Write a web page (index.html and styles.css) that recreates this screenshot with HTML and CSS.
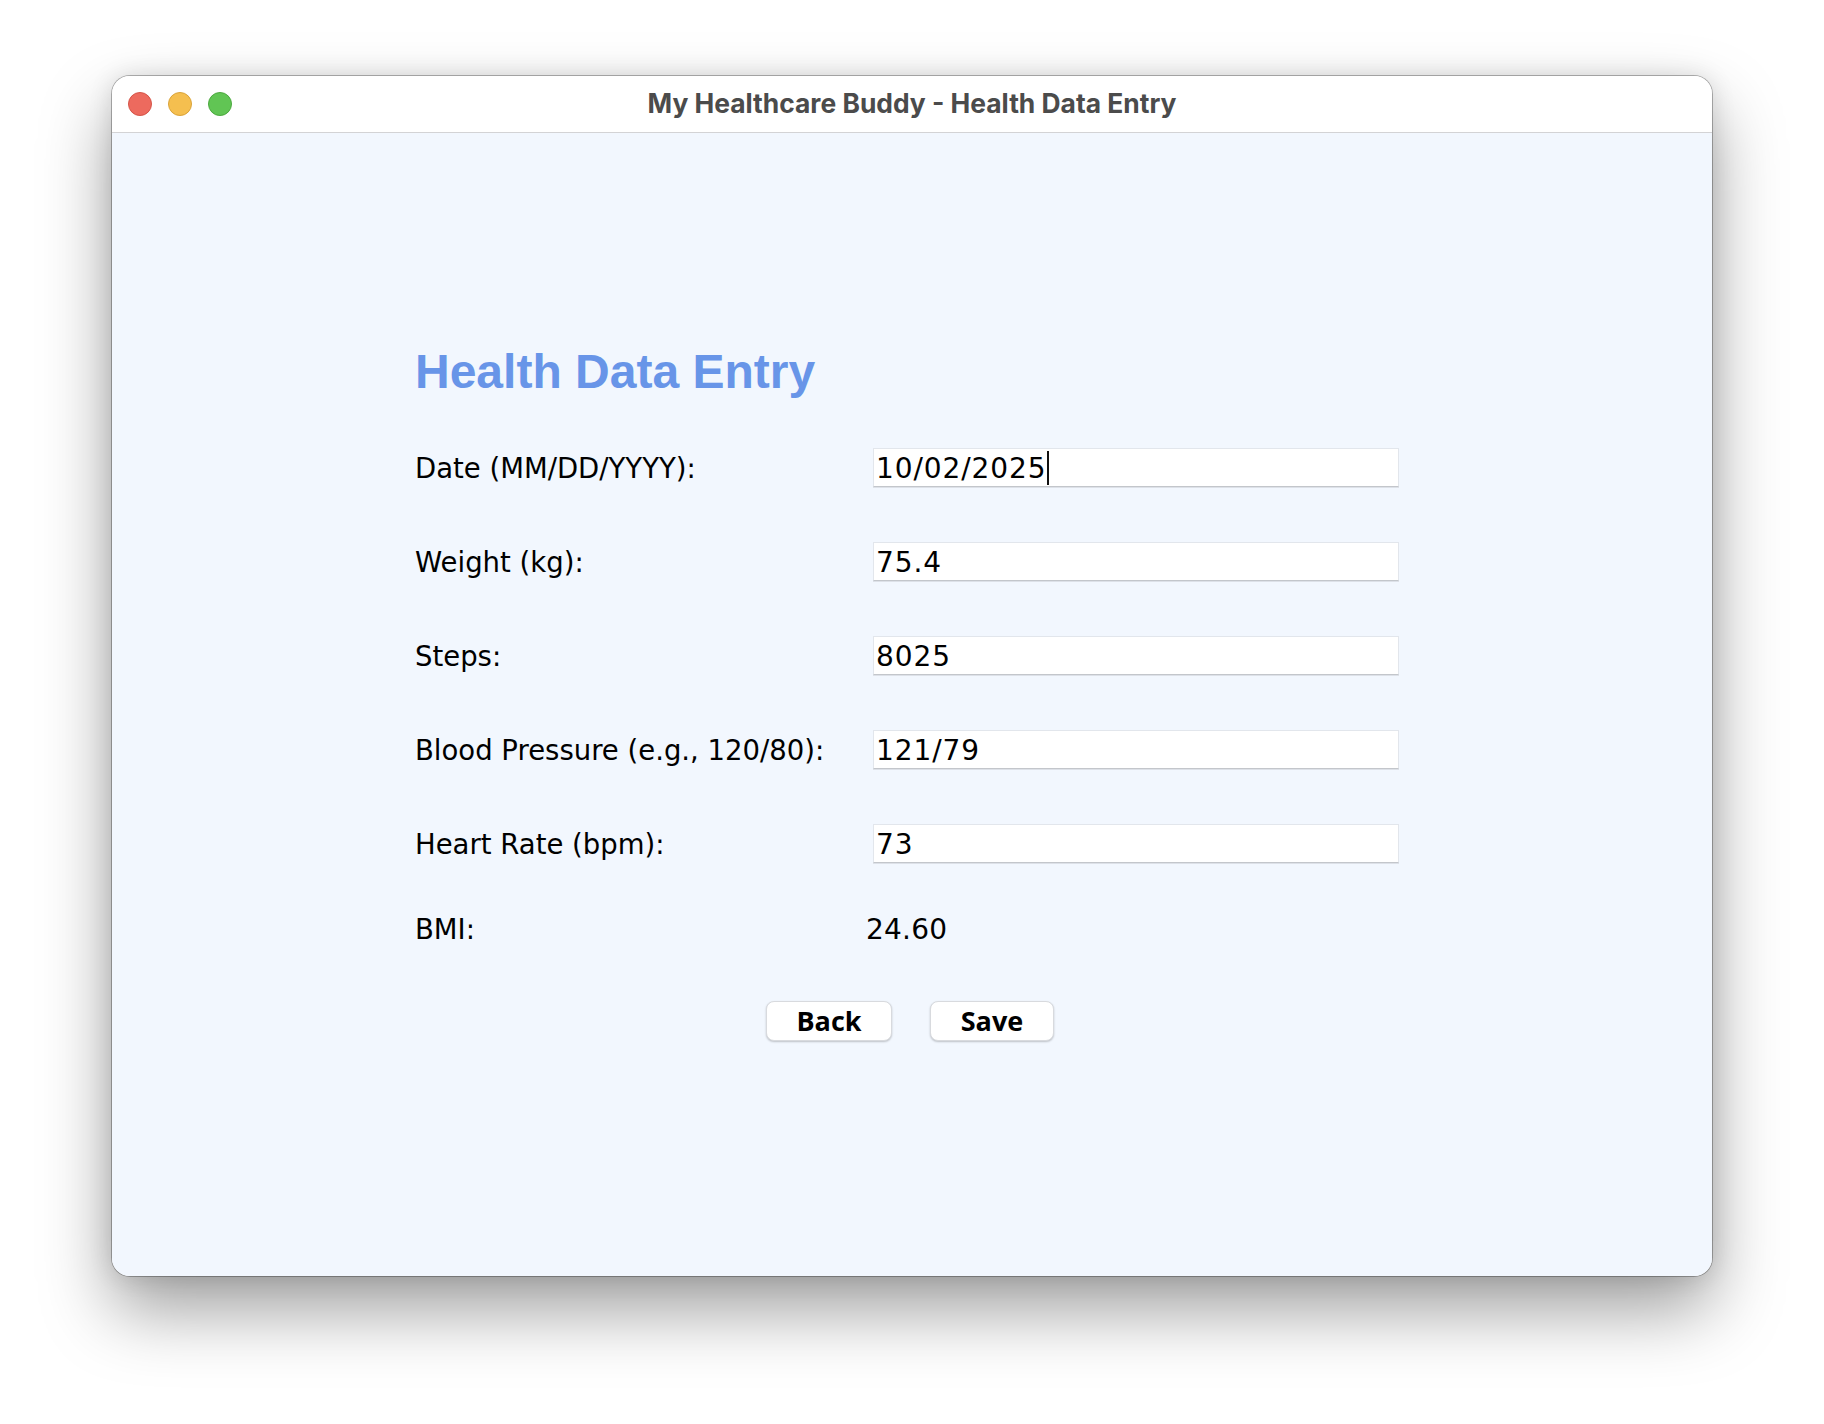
FILE: index.html
```html
<!DOCTYPE html>
<html lang="en">
<head>
<meta charset="utf-8">
<title>My Healthcare Buddy - Health Data Entry</title>
<link rel="stylesheet" href="styles.css">
</head>
<body>
<div class="window">
  <div class="titlebar">
    <div class="lights">
      <span class="light red"></span>
      <span class="light yellow"></span>
      <span class="light green"></span>
    </div>
    <div class="title">My Healthcare Buddy - Health Data Entry</div>
  </div>
  <div class="content">
    <div class="form">
      <h1 class="heading">Health Data Entry</h1>
      <div class="row first">
        <div class="label">Date (MM/DD/YYYY):</div>
        <div class="field">10/02/2025<span class="caret"></span></div>
      </div>
      <div class="row">
        <div class="label">Weight (kg):</div>
        <div class="field">75.4</div>
      </div>
      <div class="row">
        <div class="label">Steps:</div>
        <div class="field">8025</div>
      </div>
      <div class="row">
        <div class="label">Blood Pressure (e.g., 120/80):</div>
        <div class="field">121/79</div>
      </div>
      <div class="row">
        <div class="label">Heart Rate (bpm):</div>
        <div class="field">73</div>
      </div>
      <div class="row bmi">
        <div class="label">BMI:</div>
        <div class="value">24.60</div>
      </div>
    </div>
    <div class="buttons">
      <button class="btn back">Back</button>
      <button class="btn save">Save</button>
    </div>
  </div>
</div>
</body>
</html>
```

FILE: styles.css
```css
html, body {
  margin: 0;
  padding: 0;
  background: #ffffff;
}

body {
  width: 1824px;
  height: 1424px;
  overflow: hidden;
}

.window {
  margin: 76px 0 0 112px;
  width: 1600px;
  height: 1200px;
  border-radius: 18px;
  overflow: hidden;
  box-shadow: 0 0 0 1px rgba(0, 0, 0, 0.28), 0 34px 70px rgba(0, 0, 0, 0.38), 0 0 24px rgba(0, 0, 0, 0.12);
  display: flex;
  flex-direction: column;
}

.titlebar {
  height: 56px;
  flex: 0 0 56px;
  background: #ffffff;
  border-bottom: 1px solid #d3d3d5;
  display: flex;
  align-items: center;
  position: relative;
}

.lights {
  display: flex;
  gap: 16px;
  padding-left: 16px;
}

.light {
  width: 22px;
  height: 22px;
  border-radius: 50%;
  display: block;
}

.red { background: #ed6a5e; border: 1px solid #d45448; }
.yellow { background: #f5bf4f; border: 1px solid #d9a33a; }
.green { background: #61c554; border: 1px solid #4ca83f; }

.title {
  position: absolute;
  left: 0;
  right: 0;
  top: 0;
  height: 56px;
  line-height: 55px;
  text-align: center;
  font-family: Inter, "Liberation Sans", sans-serif;
  font-weight: 700;
  font-size: 26.4px;
  color: #4b4b4b;
}

.content {
  flex: 1;
  background: #f2f7fe;
  display: flex;
  flex-direction: column;
}

.form {
  padding: 215px 0 0 303px;
  display: flex;
  flex-direction: column;
}

.heading {
  margin: 0;
  font-family: "Liberation Sans", Arial, sans-serif;
  font-weight: 700;
  font-size: 48px;
  line-height: 48px;
  color: #6895e8;
}

.row {
  display: flex;
  align-items: center;
  height: 39px;
  margin-top: 55px;
}

.row.first {
  margin-top: 52px;
}

.row.bmi {
  margin-top: 46px;
}

.label {
  width: 451px;
  flex: 0 0 451px;
  font-family: "DejaVu Sans", "Open Sans", sans-serif;
  font-size: 27.5px;
  line-height: 39px;
  padding-top: 1px;
  color: #000000;
}

.field {
  box-sizing: border-box;
  width: 526px;
  height: 39px;
  margin-left: 7px;
  background: #ffffff;
  border: 1px solid #e2e6ec;
  border-bottom: 1px solid #c3c6cb;
  box-shadow: 0 1px 0 #dde1e8;
  padding-left: 2px;
  padding-top: 1px;
  font-family: "DejaVu Sans", "Open Sans", sans-serif;
  font-size: 28px;
  letter-spacing: 0.9px;
  line-height: 37px;
  color: #000000;
  display: flex;
  align-items: center;
}

.caret {
  display: inline-block;
  width: 2px;
  height: 34px;
  background: #111111;
  margin-left: 1px;
}

.value {
  font-family: "DejaVu Sans", "Open Sans", sans-serif;
  font-size: 28px;
  line-height: 39px;
  padding-top: 1px;
  letter-spacing: 0.2px;
  color: #000000;
}

.buttons {
  display: flex;
  justify-content: center;
  gap: 38px;
  margin-top: 53px;
  padding-right: 4px;
}

.btn {
  box-sizing: border-box;
  height: 40px;
  background: #ffffff;
  border: 1px solid #d8dade;
  border-radius: 8px;
  box-shadow: 0 1px 2px rgba(0, 0, 0, 0.22);
  font-family: "Open Sans", "DejaVu Sans", sans-serif;
  font-weight: 700;
  font-size: 27px;
  line-height: 36px;
  color: #000000;
  padding: 0;
}

.btn.back { width: 126px; }
.btn.save { width: 124px; }
```
